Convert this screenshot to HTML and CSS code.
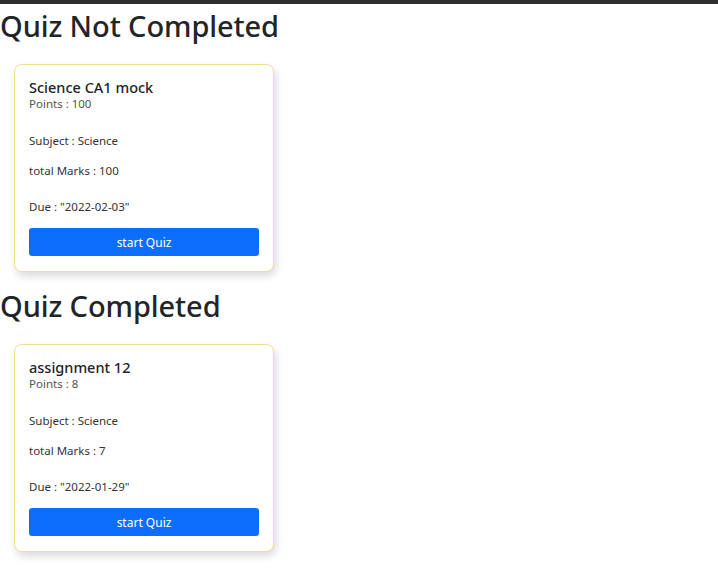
FILE: index.html
```html
<!DOCTYPE html>
<html>
<head>
<meta charset="utf-8">
<link rel="stylesheet" href="styles.css">
</head>
<body>
<div class="topbar"></div>
<section class="section">
  <h1 class="section-title">Quiz Not Completed</h1>
  <div class="quiz-card">
    <div class="quiz-title">Science CA1 mock</div>
    <div class="quiz-points">Points : 100</div>
    <p class="quiz-line subject">Subject : Science</p>
    <p class="quiz-line marks">total Marks : 100</p>
    <p class="quiz-line due">Due : "2022-02-03"</p>
    <button class="quiz-btn">start Quiz</button>
  </div>
</section>
<section class="section">
  <h1 class="section-title">Quiz Completed</h1>
  <div class="quiz-card">
    <div class="quiz-title">assignment 12</div>
    <div class="quiz-points">Points : 8</div>
    <p class="quiz-line subject">Subject : Science</p>
    <p class="quiz-line marks">total Marks : 7</p>
    <p class="quiz-line due">Due : "2022-01-29"</p>
    <button class="quiz-btn">start Quiz</button>
  </div>
</section>
</body>
</html>
```
FILE: styles.css
```css
html, body {
  margin: 0;
  padding: 0;
  background: #fff;
  font-family: "Noto Sans", "Open Sans", sans-serif;
  color: #212529;
}
.topbar {
  height: 4px;
  background: #2e2e2e;
}
.section {
  display: flex;
  flex-direction: column;
  align-items: flex-start;
  padding-top: 2px;
}
.section-title {
  margin: 0;
  font-size: 29px;
  font-weight: 500;
  line-height: 40px;
  height: 40px;
  color: #212529;
  letter-spacing: -0.1px;
}
.quiz-card {
  box-sizing: border-box;
  width: 260px;
  margin: 18px 0 12px 14px;
  padding: 12px 14px 15px;
  border: 1px solid #f3de95;
  border-radius: 8px;
  background: #fff;
  box-shadow: 2px 4px 8px rgba(0, 0, 0, 0.15);
  display: flex;
  flex-direction: column;
}
.quiz-title {
  font-size: 14.5px;
  font-weight: 500;
  line-height: 20px;
  color: #212529;
}
.quiz-points {
  font-size: 11.5px;
  line-height: 13px;
  color: #555;
}
.quiz-line {
  margin: 0;
  font-size: 11.5px;
  line-height: 18px;
  color: #333;
}
.subject { margin-top: 22px; }
.marks { margin-top: 12px; }
.due { margin-top: 18px; }
.quiz-btn {
  margin-top: 12px;
  height: 28px;
  border: none;
  border-radius: 3px;
  background: #0d6efd;
  color: #fff;
  font-family: inherit;
  font-size: 12px;
  padding: 0;
  cursor: pointer;
}
```
